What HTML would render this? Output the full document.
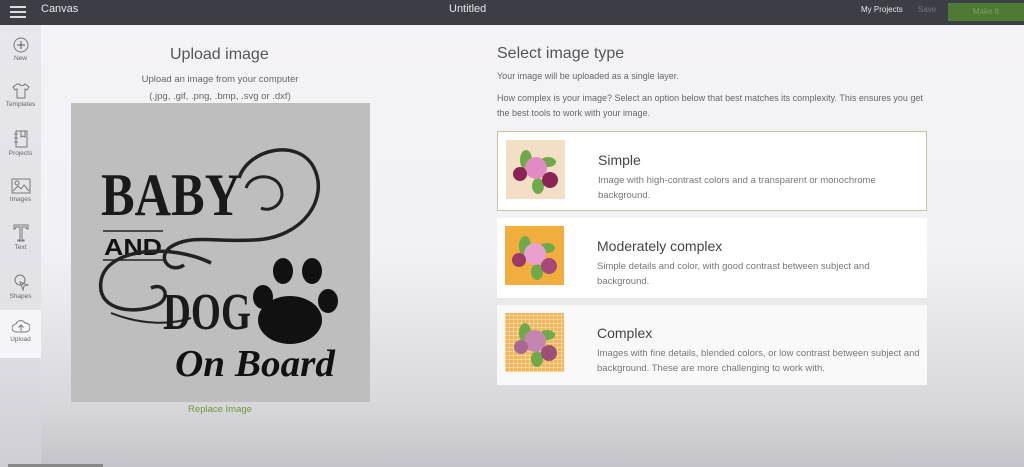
<!DOCTYPE html>
<html><head><meta charset="utf-8"><style>
*{margin:0;padding:0;box-sizing:border-box}
body{width:1024px;height:467px;overflow:hidden;font-family:"Liberation Sans",sans-serif;background:linear-gradient(#f4f3f7 0,#f2f1f5 250px,#d9d8dc 400px,#c5c4c9 467px);position:relative}
.hdr{position:absolute;left:0;top:0;width:1024px;height:25px;background:#3b3e45;color:#e8e8ea;font-size:11px}
.side{position:absolute;left:0;top:25px;width:41px;height:442px;background:linear-gradient(#e8e7ec,#e2e1e6 300px,#cfced3)}
.si{position:absolute;left:0;width:41px;text-align:center;font-size:6.5px;color:#666}
.si svg{display:block;margin:0 auto 2px}
.abs{position:absolute}
.card{position:absolute;left:497px;width:430px;height:80px;background:#fff}
.card .th{position:absolute;left:8px;top:8px;width:59px;height:59px}
.card h3{position:absolute;left:100px;font-weight:normal;font-size:14px;color:#444}
.card p{position:absolute;left:100px;width:325px;font-size:9.5px;line-height:15px;color:#777}
</style></head><body>
<div class="hdr">
 <div class="abs" style="left:10px;top:6px;width:16px;height:2px;background:#ddd;box-shadow:0 5px 0 #ddd,0 10px 0 #ddd"></div>
 <div class="abs" style="left:41px;top:3px;font-size:11px">Canvas</div>
 <div class="abs" style="left:449px;top:3px;font-size:11px">Untitled</div>
 <div class="abs" style="left:861px;top:5px;font-size:8px">My Projects</div>
 <div class="abs" style="left:918px;top:5px;font-size:8px;color:#777">Save</div>
 <div class="abs" style="left:948px;top:3px;width:76px;height:18px;background:#4f7a33;color:#7fa060;font-size:8px;text-align:center;line-height:18px">Make It</div>
</div>
<div class="side">
 <div class="si" style="top:12px"><svg width="16" height="16"><circle cx="8" cy="8" r="7" fill="none" stroke="#777"/><path d="M8 4v8M4 8h8" stroke="#555"/></svg>New</div>
 <div class="si" style="top:58px"><svg width="18" height="16"><path d="M5 1l-4 3 2 3 2-1v9h8V6l2 1 2-3-4-3c-1 2-5 2-6 0z" fill="none" stroke="#777"/></svg>Templates</div>
 <div class="si" style="top:105px"><svg width="16" height="18"><rect x="3" y="1" width="11" height="16" fill="none" stroke="#777"/><path d="M1 4h4M1 8h4M1 12h4M8 1v6l2-1 2 1V1" fill="none" stroke="#777"/></svg>Projects</div>
 <div class="si" style="top:153px"><svg width="20" height="16"><rect x="1" y="1" width="18" height="14" fill="none" stroke="#777"/><circle cx="6" cy="5" r="2" fill="none" stroke="#777"/><path d="M2 13l5-5 3 3 3-4 5 6" fill="none" stroke="#777"/></svg>Images</div>
 <div class="si" style="top:199px"><svg width="16" height="18"><path d="M1 1h14v4h-1l-1-2H9v13h2v1H5v-1h2V3H3L2 5H1z" fill="none" stroke="#777"/></svg>Text</div>
 <div class="si" style="top:248px"><svg width="16" height="18"><circle cx="7" cy="7" r="5" fill="none" stroke="#777"/><path d="M7 9l3 8 1-4 4-1z" fill="none" stroke="#777"/></svg>Shapes</div>
 <div class="abs" style="left:0;top:285px;width:41px;height:48px;background:#f5f4f8"></div>
 <div class="si" style="top:295px"><svg width="18" height="14"><path d="M4 12a4 4 0 010-8 5 5 0 019-1 4 4 0 011 9z" fill="none" stroke="#777"/><path d="M9 11V5M6.5 7.5L9 5l2.5 2.5" fill="none" stroke="#777"/></svg>Upload</div>
</div>

<div class="abs" style="left:170px;top:46px;font-size:16px;color:#555">Upload image</div>
<div class="abs" style="left:70px;top:71px;width:300px;text-align:center;font-size:9.5px;color:#666;line-height:17px">Upload an image from your computer<br>(.jpg, .gif, .png, .bmp, .svg or .dxf)</div>
<div class="abs" style="left:71px;top:103px;width:299px;height:299px;background:#bebebe">
<svg width="299" height="299" viewBox="0 0 299 299">
 <text x="30" y="112" font-family="Liberation Serif" font-weight="bold" font-size="60" fill="#1a1a1a" textLength="140" lengthAdjust="spacingAndGlyphs">BABY</text>
 <path d="M32 128h60M32 157h60" stroke="#222" stroke-width="1.5"/>
 <text x="33" y="152" font-family="Liberation Sans" font-weight="bold" font-size="23" fill="#111" textLength="58" lengthAdjust="spacingAndGlyphs">AND</text>
 <path d="M168 75c10-30 60-40 75-10s-10 70-60 72c-40 2-60-5-80 5-20 10-5 30 10 20" fill="none" stroke="#222" stroke-width="3.5"/>
 <path d="M175 85c5-15 30-15 35 0s-10 25-20 20" fill="none" stroke="#222" stroke-width="3"/>
 <path d="M140 160c-40-20-105-15-110 18s40 33 58 23c12-8 5-22-8-16" fill="none" stroke="#222" stroke-width="3.5"/>
 <path d="M40 210c30 12 60 12 80 5" fill="none" stroke="#222" stroke-width="2"/>
 <text x="92" y="226" font-family="Liberation Serif" font-weight="bold" font-size="52" fill="#1a1a1a" textLength="88" lengthAdjust="spacingAndGlyphs">DOG</text>
 <ellipse cx="219" cy="217" rx="32" ry="24" fill="#111"/>
 <ellipse cx="192" cy="194" rx="10" ry="12" fill="#111"/>
 <ellipse cx="212" cy="168" rx="10" ry="13" fill="#111"/>
 <ellipse cx="241" cy="168" rx="10" ry="13" fill="#111"/>
 <ellipse cx="257" cy="198" rx="10" ry="12" fill="#111"/>
 <text x="104" y="273" font-family="Liberation Serif" font-style="italic" font-weight="bold" font-size="38" fill="#111" textLength="160" lengthAdjust="spacingAndGlyphs">On Board</text>
</svg>
</div>
<div class="abs" style="left:70px;top:404px;width:300px;text-align:center;font-size:9.5px;color:#6d9a3a">Replace Image</div>

<div class="abs" style="left:497px;top:45px;font-size:16px;color:#555">Select image type</div>
<div class="abs" style="left:497px;top:71px;font-size:9px;color:#666">Your image will be uploaded as a single layer.</div>
<div class="abs" style="left:497px;top:91px;width:440px;font-size:9px;color:#666;line-height:15px">How complex is your image? Select an option below that best matches its complexity. This ensures you get the best tools to work with your image.</div>

<div class="card" style="top:131px;border:1px solid #c8c49a">
 <div class="th" style="background:#f3dfc6"><svg width="59" height="59"><ellipse cx="20" cy="20" rx="6" ry="10" fill="#6eaa4a"/><ellipse cx="42" cy="22" rx="8" ry="5" fill="#6eaa4a"/><ellipse cx="32" cy="46" rx="6" ry="8" fill="#6eaa4a"/><circle cx="30" cy="28" r="11" fill="#e08bc3"/><circle cx="14" cy="34" r="7" fill="#8c2356"/><circle cx="44" cy="40" r="8" fill="#8c2356"/></svg></div>
 <h3 style="top:20px">Simple</h3>
 <p style="top:41px">Image with high-contrast colors and a transparent or monochrome background.</p>
</div>
<div class="card" style="top:218px">
 <div class="th" style="left:8px;background:#f2ad3f"><svg width="59" height="59"><ellipse cx="20" cy="20" rx="6" ry="10" fill="#6eaa4a"/><ellipse cx="42" cy="22" rx="8" ry="5" fill="#6eaa4a"/><ellipse cx="32" cy="46" rx="6" ry="8" fill="#6eaa4a"/><circle cx="30" cy="28" r="11" fill="#e9a0cf"/><circle cx="14" cy="34" r="7" fill="#9b3a66"/><circle cx="44" cy="40" r="8" fill="#a8487a"/></svg></div>
 <h3 style="top:20px">Moderately complex</h3>
 <p style="top:41px">Simple details and color, with good contrast between subject and background.</p>
</div>
<div class="card" style="top:305px;background:#f9f9fa">
 <div class="th" style="background:#f2b658;background-image:repeating-linear-gradient(0deg,rgba(255,255,255,.35) 0 1px,transparent 1px 4px),repeating-linear-gradient(90deg,rgba(255,255,255,.35) 0 1px,transparent 1px 4px)"><svg width="59" height="59"><ellipse cx="20" cy="20" rx="6" ry="10" fill="#6eaa4a"/><ellipse cx="42" cy="22" rx="8" ry="5" fill="#6eaa4a"/><ellipse cx="32" cy="46" rx="6" ry="8" fill="#6eaa4a"/><circle cx="30" cy="28" r="11" fill="#c486b0"/><circle cx="16" cy="34" r="7" fill="#a66a90"/><circle cx="44" cy="40" r="8" fill="#9d4f75"/></svg></div>
 <h3 style="top:20px">Complex</h3>
 <p style="top:41px">Images with fine details, blended colors, or low contrast between subject and background. These are more challenging to work with.</p>
</div>
<div class="abs" style="left:8px;top:464px;width:95px;height:3px;background:#888"></div>
</body></html>
